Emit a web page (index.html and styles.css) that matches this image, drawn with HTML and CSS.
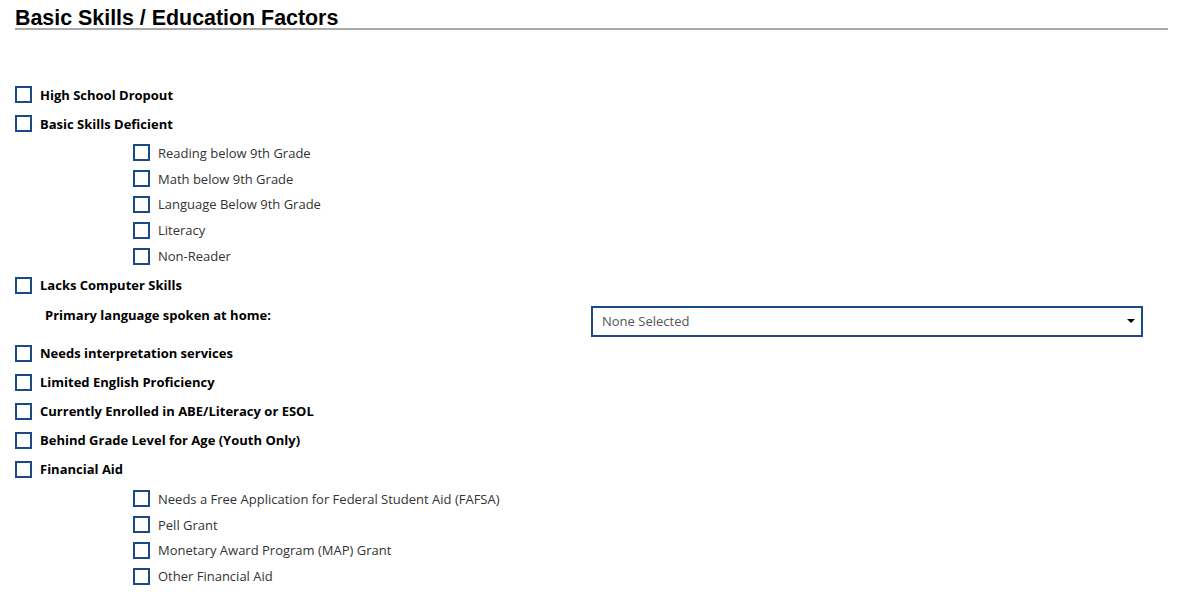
FILE: index.html
```html
<!DOCTYPE html>
<html lang="en">
<head>
  <meta charset="UTF-8" />
  <title>Basic Skills / Education Factors</title>
  <link rel="stylesheet" href="styles.css">
</head>
<body>
  <div class="section">
    <h2 class="section-title">Basic Skills / Education Factors</h2>

    <div class="factors">
      <label class="factor"><span class="box"></span>High School Dropout</label>
      <label class="factor"><span class="box"></span>Basic Skills Deficient</label>
      <div class="sub-list">
        <label class="sub"><span class="box"></span>Reading below 9th Grade</label>
        <label class="sub"><span class="box"></span>Math below 9th Grade</label>
        <label class="sub"><span class="box"></span>Language Below 9th Grade</label>
        <label class="sub"><span class="box"></span>Literacy</label>
        <label class="sub"><span class="box"></span>Non-Reader</label>
      </div>
      <label class="factor"><span class="box"></span>Lacks Computer Skills</label>

      <div class="lang-row">
        <span class="lang-label">Primary language spoken at home:</span>
        <div class="select">
          <span>None Selected</span>
          <span class="caret"></span>
        </div>
      </div>

      <label class="factor"><span class="box"></span>Needs interpretation services</label>
      <label class="factor"><span class="box"></span>Limited English Proficiency</label>
      <label class="factor"><span class="box"></span>Currently Enrolled in ABE/Literacy or ESOL</label>
      <label class="factor"><span class="box"></span>Behind Grade Level for Age (Youth Only)</label>
      <label class="factor"><span class="box"></span>Financial Aid</label>
      <div class="sub-list">
        <label class="sub"><span class="box"></span>Needs a Free Application for Federal Student Aid (FAFSA)</label>
        <label class="sub"><span class="box"></span>Pell Grant</label>
        <label class="sub"><span class="box"></span>Monetary Award Program (MAP) Grant</label>
        <label class="sub"><span class="box"></span>Other Financial Aid</label>
      </div>
    </div>
  </div>
</body>
</html>
```

FILE: styles.css
```css
body {
  margin: 0;
  background: #fff;
  color: #000;
  font-family: 'Open Sans', 'Noto Sans', sans-serif;
  font-size: 13px;
}

.section {
  padding: 9px 13px 0 15px;
}

.section-title {
  margin: 0;
  font-family: 'Liberation Sans', Arial, sans-serif;
  font-size: 21.4px;
  font-weight: bold;
  line-height: 19px;
  border-bottom: 2px solid #aaaaaa;
}

.factors {
  display: flex;
  flex-direction: column;
  padding-top: 50px;
}

.box {
  width: 13px;
  height: 13px;
  border: 2px solid #1b4b84;
  flex: none;
}

.factor {
  display: flex;
  align-items: center;
  gap: 8px;
  height: 29px;
  font-weight: bold;
}

.sub-list {
  display: flex;
  flex-direction: column;
  padding: 2px 0 2px 118px;
}

.sub {
  display: flex;
  align-items: center;
  gap: 8px;
  height: 25.8px;
  color: #333;
}

.lang-row {
  display: flex;
  align-items: flex-start;
  height: 39px;
}

.lang-label {
  font-weight: bold;
  width: 546px;
  padding: 6px 0 0 30px;
}

.select {
  display: flex;
  align-items: center;
  justify-content: space-between;
  width: 533px;
  height: 27px;
  margin-top: 6px;
  border: 2px solid #1b4b84;
  padding: 0 6px 0 9px;
  color: #555;
}

.caret {
  width: 0;
  height: 0;
  border-left: 4px solid transparent;
  border-right: 4px solid transparent;
  border-top: 4px solid #000;
}
```
